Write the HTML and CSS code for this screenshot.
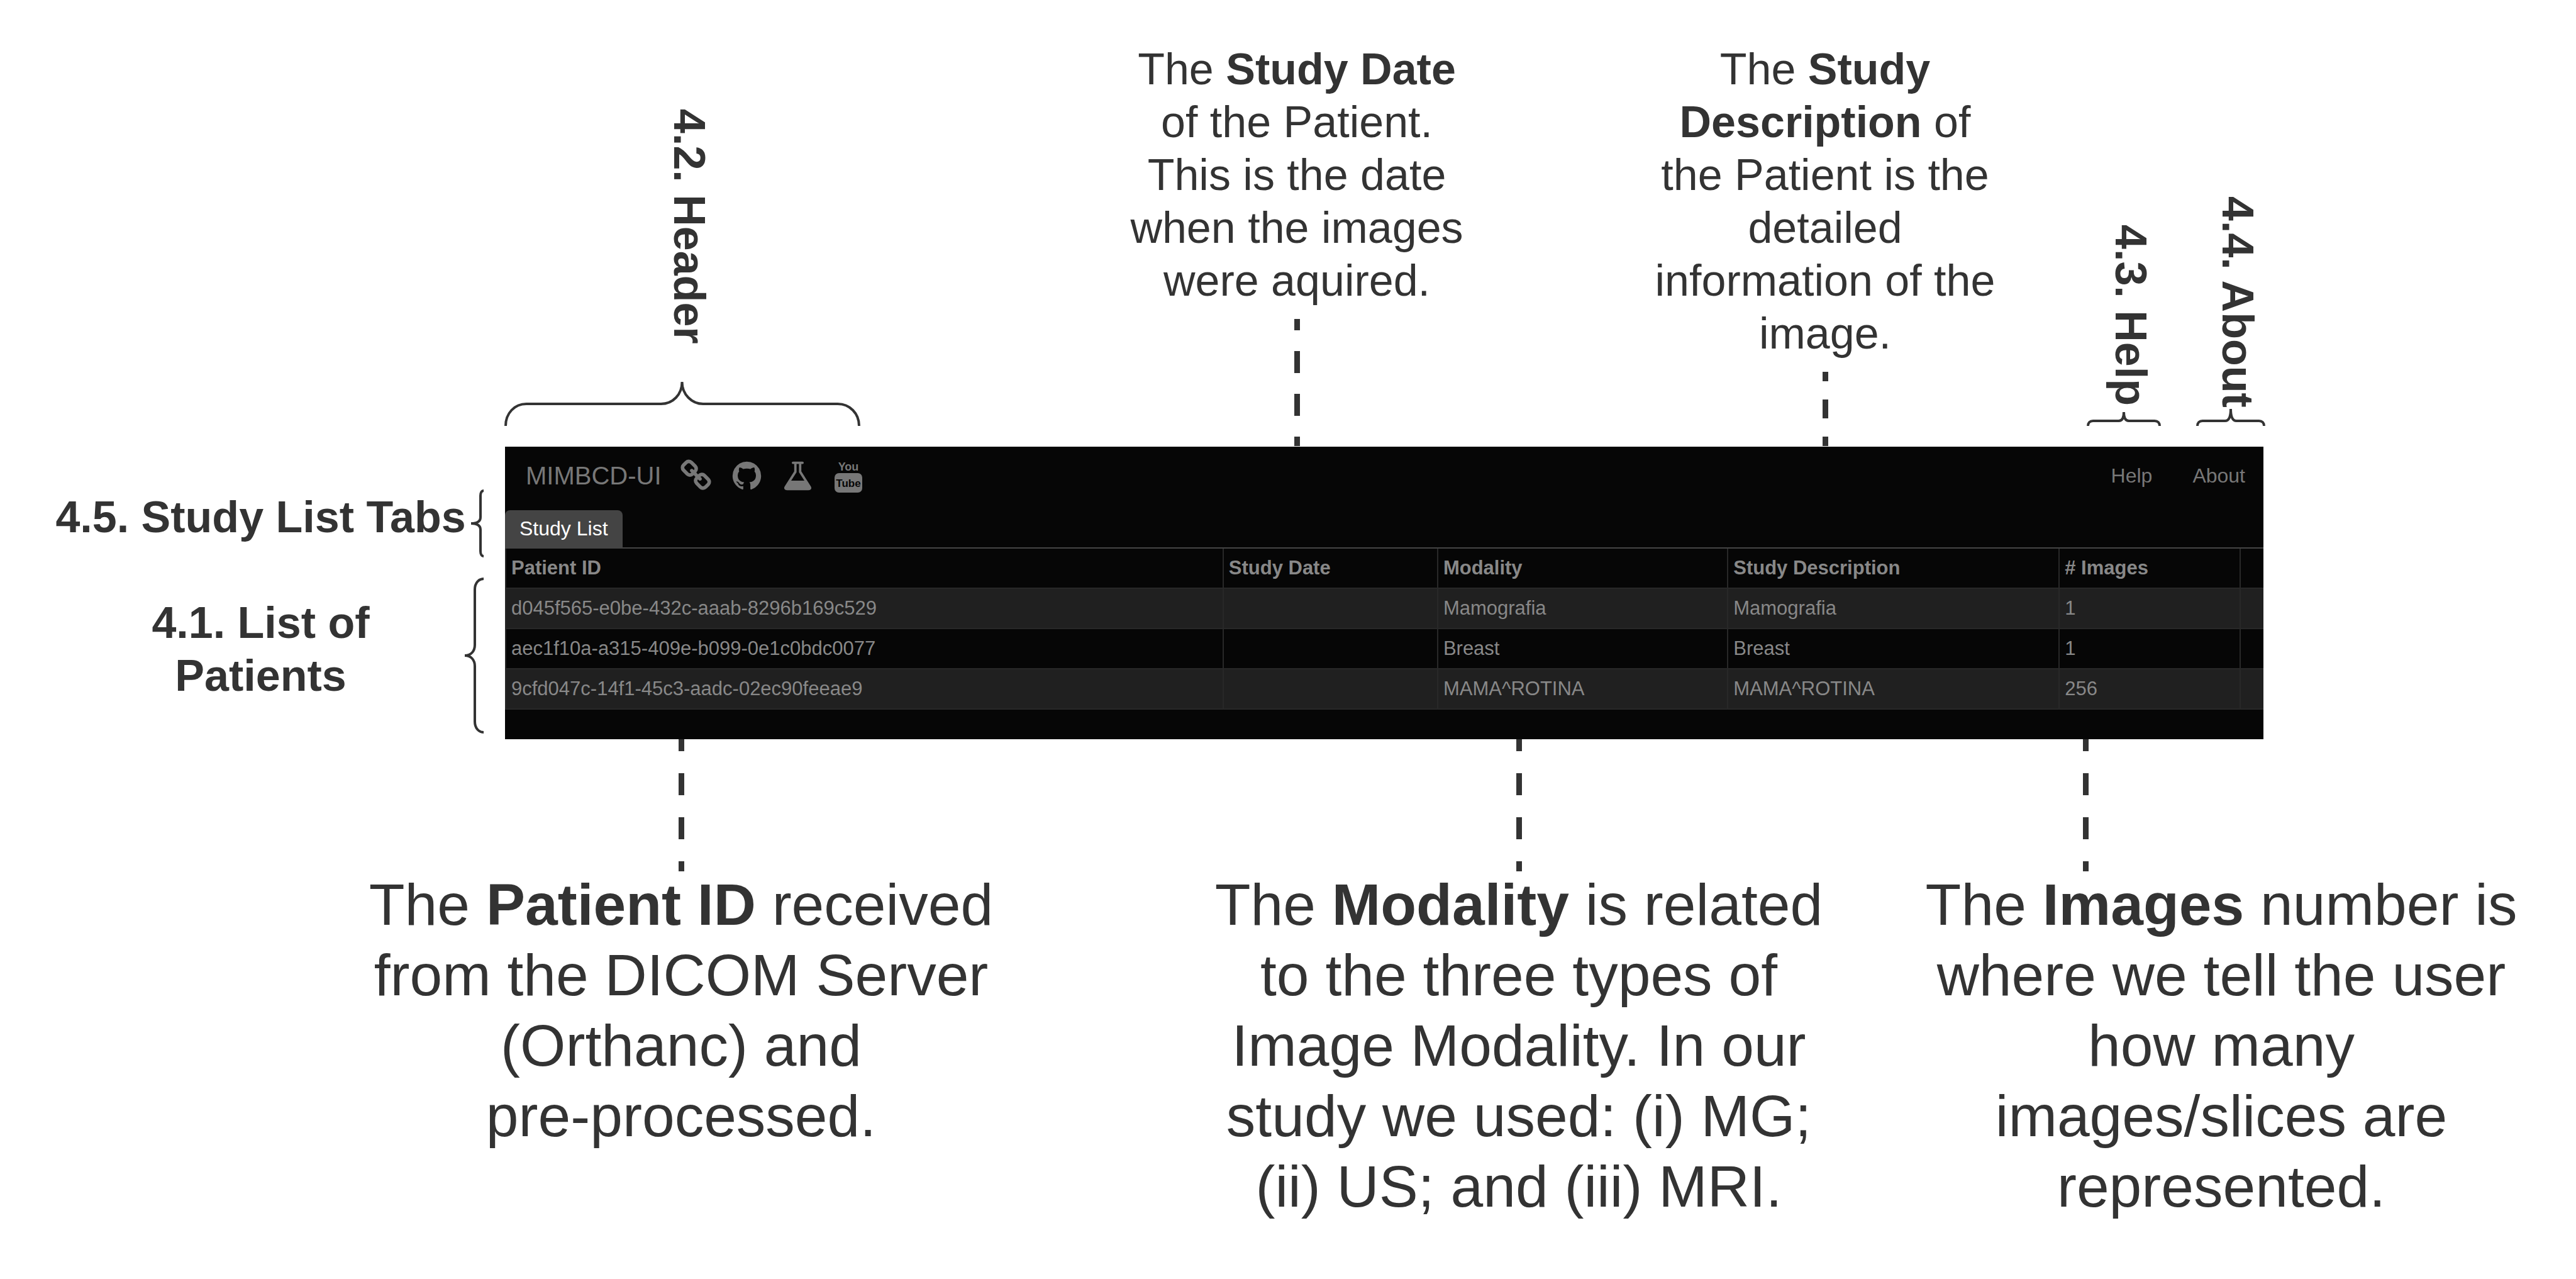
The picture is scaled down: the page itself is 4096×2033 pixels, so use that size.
FILE: index.html
```html
<!DOCTYPE html>
<html lang="en">
<head>
<meta charset="utf-8">
<meta name="viewport" content="width=device-width, initial-scale=1">
<title>MIMBCD-UI Study List</title>
<link rel="stylesheet" href="styles.css">
</head>
<body>
<main class="figure">

  <section class="callouts-top">
    <div class="callout area-header">
      <p class="label label-vertical label-header">4.2. Header</p>
      <svg class="brace" width="566" height="72" viewBox="0 0 566 72" aria-hidden="true"><path d="M2 72C2 52 16 37 35 37H249C268 37 282.500 22 282.500 2C282.500 22 298 37 316 37H530C549 37 564 52 564 72"/></svg>
    </div>
    <div class="callout area-date">
      <p class="note">The <strong>Study Date</strong> of the Patient. This is the date when the images were aquired.</p>
      <svg class="dash" width="9" height="203" viewBox="0 0 9 203" aria-hidden="true"><path stroke-dasharray="35 33" stroke-dashoffset="17" d="M4.500 0V202"/></svg>
    </div>
    <div class="callout area-description">
      <p class="note">The <strong>Study Description</strong> of the Patient is the detailed information of the image.</p>
      <svg class="dash" width="9" height="119" viewBox="0 0 9 119" aria-hidden="true"><path stroke-dasharray="30 29" stroke-dashoffset="15" d="M4.500 0V118"/></svg>
    </div>
    <div class="callout area-help">
      <p class="label label-vertical label-help">4.3. Help</p>
      <svg class="brace" width="118" height="24" viewBox="0 0 118 24" aria-hidden="true"><path d="M2 24C2 19 5 16 10 16H51C56 16 59 12 59 2C59 12 62 16 67 16H108C113 16 116 19 116 24"/></svg>
    </div>
    <div class="callout area-about">
      <p class="label label-vertical">4.4. About</p>
      <svg class="brace" width="110" height="29" viewBox="0 0 110 29" aria-hidden="true"><path d="M2 29C2 24 5 21 10 21H46C52 21 55 16 55 2C55 16 58 21 64 21H100C105 21 108 24 108 29"/></svg>
    </div>
  </section>

  <section class="middle">
    <div class="callouts-side">
      <div class="side-row">
        <p class="label label-tabs">4.5. Study List Tabs</p>
        <svg class="brace" width="30" height="108" viewBox="0 0 30 108" aria-hidden="true"><path d="M30 2C27 2 25 5 25 10V44C25 51 20 54 10 54C20 54 25 57 25 64V98C25 103 27 106 30 106"/></svg>
      </div>
      <div class="side-row">
        <p class="label label-list">4.1. List of Patients</p>
        <svg class="brace" width="30" height="248" viewBox="0 0 30 248" aria-hidden="true"><path d="M30 2C22 2 16 9 16 19V107C16 117 10 124 0 124C10 124 16 131 16 141V229C16 239 22 246 30 246"/></svg>
      </div>
    </div>

    <div class="app">
      <nav class="navbar">
        <a class="brand" href="#">MIMBCD-UI</a>
        <a class="icon-link" href="#link" aria-label="Website"><svg class="icon" viewBox="0 0 1792 1792"><path d="M1520 1216q0-40-28-68l-208-208q-28-28-68-28-42 0-72 32 3 3 19 18.500t21.500 21.500 15 19 13 25.500 3.500 27.500q0 40-28 68t-68 28q-15 0-27.500-3.500t-25.500-13-19-15-21.500-21.500-18.500-19q-33 31-33 73 0 40 28 68l206 207q27 27 68 27 40 0 68-26l147-146q28-28 28-67zm-703-705q0-40-28-68l-206-207q-28-28-68-28-39 0-68 27l-147 146q-28 28-28 67 0 40 28 68l208 208q27 27 68 27 42 0 72-31-3-3-19-18.500t-21.500-21.500-15-19-13-25.500-3.500-27.500q0-40 28-68t68-28q15 0 27.500 3.500t25.500 13 19 15 21.500 21.500 18.500 19q33-31 33-73zm895 705q0 120-85 203l-147 146q-83 83-203 83-121 0-204-85l-206-207q-83-83-83-203 0-123 88-209l-88-88q-86 88-208 88-120 0-204-84l-208-208q-84-84-84-204t85-203l147-146q83-83 203-83 121 0 204 85l206 207q83 83 83 203 0 123-88 209l88 88q86-88 208-88 120 0 204 84l208 208q84 84 84 204z"/></svg></a>
        <a class="icon-link" href="#github" aria-label="GitHub"><svg class="icon" viewBox="0 0 1792 1792"><path d="M896 128q209 0 385.500 103t279.500 279.500 103 385.500q0 251-146.500 451.500t-378.500 277.500q-27 5-40-7t-13-30q0-3 .5-76.500t.5-134.500q0-97-52-142 57-6 102.500-18t94-39 81-66.500 53-105 20.500-150.500q0-119-79-206 37-91-8-204-28-9-81 11t-92 44l-38 24q-93-26-192-26t-192 26q-16-11-42.500-27t-83.500-38.500-85-13.500q-45 113-8 204-79 87-79 206 0 85 20.500 150t52.500 105 80.500 67 94 39 102.500 18q-39 36-49 103-21 10-45 15t-57 5-65.500-21.500-55.500-62.500q-19-32-48.500-52t-49.500-24l-20-3q-21 0-29 4.500t-5 11.500 9 14 13 12l7 5q22 10 43.500 38t31.500 51l10 23q13 38 44 61.500t67 30 69.500 7 55.500-3.500l23-4q0 38 .5 88.500t.5 54.500q0 18-13 30t-40 7q-232-77-378.500-277.500t-146.500-451.500q0-209 103-385.500t279.500-279.500 385.500-103z"/></svg></a>
        <a class="icon-link" href="#lab" aria-label="Experiments"><svg class="icon" viewBox="0 0 1792 1792"><path d="M1591 1448q56 89 21.500 152.500t-140.500 63.500h-1152q-106 0-140.500-63.500t21.500-152.500l503-793v-399h-64q-26 0-45-19t-19-45 19-45 45-19h512q26 0 45 19t19 45-19 45-45 19h-64v399zm-779-725l-272 429h712l-272-429-20-31v-436h-128v436z"/></svg></a>
        <a class="icon-link" href="#youtube" aria-label="YouTube"><svg class="icon" viewBox="0 0 53 53"><rect x="4" y="22" width="44" height="31" rx="7"/><text class="logo-you" x="26" y="18">You</text><text class="logo-tube" x="26" y="44">Tube</text></svg></a>
        <div class="nav-links">
          <a href="#help">Help</a>
          <a href="#about">About</a>
        </div>
      </nav>
      <div class="tabs" role="tablist">
        <button class="tab" type="button" role="tab" aria-selected="true">Study List</button>
      </div>
      <table class="studies">
        <thead>
          <tr><th class="col-id">Patient ID</th><th class="col-date">Study Date</th><th class="col-modality">Modality</th><th class="col-description">Study Description</th><th class="col-images"># Images</th><th></th></tr>
        </thead>
        <tbody>
          <tr><td>d045f565-e0be-432c-aaab-8296b169c529</td><td></td><td>Mamografia</td><td>Mamografia</td><td>1</td><td></td></tr>
          <tr><td>aec1f10a-a315-409e-b099-0e1c0bdc0077</td><td></td><td>Breast</td><td>Breast</td><td>1</td><td></td></tr>
          <tr><td>9cfd047c-14f1-45c3-aadc-02ec90feeae9</td><td></td><td>MAMA^ROTINA</td><td>MAMA^ROTINA</td><td>256</td><td></td></tr>
        </tbody>
      </table>
    </div>
  </section>

  <section class="callouts-bottom">
    <div class="callout area-patient">
      <svg class="dash" width="9" height="207" viewBox="0 0 9 207" aria-hidden="true"><path stroke-dasharray="35 35" stroke-dashoffset="16" d="M4.500 0V210"/></svg>
      <p class="note note-large">The <strong>Patient ID</strong> received from the DICOM Server (Orthanc) and <span class="keep">pre-processed.</span></p>
    </div>
    <div class="callout area-modality">
      <svg class="dash" width="9" height="207" viewBox="0 0 9 207" aria-hidden="true"><path stroke-dasharray="35 35" stroke-dashoffset="16" d="M4.500 0V210"/></svg>
      <p class="note note-large">The <strong>Modality</strong> is related to the three types of Image Modality. In our study we used: (i) MG; (ii) US; and (iii) MRI.</p>
    </div>
    <div class="callout area-images">
      <svg class="dash dash-images" width="9" height="207" viewBox="0 0 9 207" aria-hidden="true"><path stroke-dasharray="35 35" stroke-dashoffset="16" d="M4.500 0V210"/></svg>
      <p class="note note-large">The <strong>Images</strong> number is where we tell the user how many <span class="keep">images/slices</span> are represented.</p>
    </div>
  </section>

</main>
</body>
</html>
```

FILE: styles.css
```css
* {
  box-sizing: border-box;
}

body {
  margin: 0;
  background: #fff;
  color: #333;
  font-family: "Liberation Sans", Arial, Helvetica, sans-serif;
}

p {
  margin: 0;
}

svg {
  display: block;
  flex: none;
}

/* Annotations */

.callouts-top {
  display: grid;
  grid-template-columns: 802fr 566fr 414fr 560fr 280fr 560fr 136fr 118fr 56fr 110fr 494fr;
  align-items: end;
  padding-top: 68px;
}

.callout {
  display: flex;
  flex-direction: column;
  align-items: center;
}

.area-header {
  grid-column: 2;
  padding-bottom: 33px;
}

.area-date {
  grid-column: 4;
}

.area-description {
  grid-column: 6;
}

.area-help {
  grid-column: 8;
  padding-bottom: 33px;
}

.area-about {
  grid-column: 10;
  padding-bottom: 33px;
}

.note {
  font-size: 70px;
  line-height: 84px;
  text-align: center;
}

.callouts-top .note {
  margin-bottom: 19px;
}

.note-large {
  font-size: 93px;
  line-height: 112px;
}

.keep {
  white-space: nowrap;
}

.label {
  font-size: 70px;
  line-height: 84px;
  font-weight: 700;
  text-align: center;
}

.label-vertical {
  writing-mode: vertical-rl;
  white-space: nowrap;
  margin-left: 22px;
}

.label-header {
  margin-bottom: 58px;
}

.label-help {
  margin-bottom: 8px;
}

.brace path {
  fill: none;
  stroke: #333;
  stroke-width: 4;
}

.dash {
  overflow: visible;
}

.dash path {
  fill: none;
  stroke: #333;
  stroke-width: 9;
}

.middle {
  display: grid;
  grid-template-columns: 803fr 2796fr 497fr;
}

.callouts-side {
  display: flex;
  flex-direction: column;
  gap: 32px;
  padding: 68px 34px 0 90px;
}

.side-row {
  display: grid;
  grid-template-columns: minmax(0, 1fr) 30px;
  align-items: center;
  justify-items: center;
}

.side-row .label {
  padding-bottom: 20px;
}

.label-tabs {
  white-space: nowrap;
}

.label-list {
  max-width: 400px;
}

.callouts-bottom {
  display: grid;
  grid-template-columns: 583fr 1000fr 332fr 1000fr 117fr 1000fr 64fr;
  align-items: start;
}

.area-patient {
  grid-column: 2;
}

.area-modality {
  grid-column: 4;
}

.area-images {
  grid-column: 6;
}

.dash-images {
  align-self: flex-start;
  margin-left: 28%;
}

/* Application window */

.app {
  background: #060606;
  padding-bottom: 47px;
}

.navbar {
  display: flex;
  align-items: center;
  gap: 28px;
  min-height: 92px;
  padding: 0 29px 0 33px;
}

.navbar a {
  color: #777;
  text-decoration: none;
}

.brand {
  font-size: 40px;
}

.icon {
  width: 53px;
  height: 53px;
  fill: #777;
}

.icon text {
  font-family: "Liberation Sans Narrow", "Liberation Sans", Arial, sans-serif;
  font-weight: 700;
  text-anchor: middle;
}

.logo-you {
  font-size: 18px;
}

.icon .logo-tube {
  font-size: 17px;
  fill: #060606;
}

.nav-links {
  display: flex;
  gap: 64px;
  margin-left: auto;
  font-size: 32px;
}

.tabs {
  display: flex;
  margin-top: 9px;
  border-bottom: 2px solid #444;
}

.tab {
  height: 59px;
  padding: 0 23px;
  border: 0;
  border-radius: 8px 8px 0 0;
  background: #444;
  color: #fff;
  font: inherit;
  font-size: 32px;
}

.studies {
  width: 100%;
  table-layout: fixed;
  border-collapse: separate;
  border-spacing: 0;
  color: #888;
  font-size: 31px;
  line-height: 36px;
}

.studies th,
.studies td {
  height: 64px;
  padding: 0 8px;
  border-left: 2px solid #282828;
  border-bottom: 2px solid #282828;
  text-align: left;
  white-space: nowrap;
}

.studies tbody tr:nth-child(odd) {
  background: #202020;
}

.col-id {
  width: 40.8%;
}

.col-date {
  width: 12.2%;
}

.col-modality {
  width: 16.5%;
}

.col-description {
  width: 18.85%;
}

.col-images {
  width: 10.3%;
}
```
